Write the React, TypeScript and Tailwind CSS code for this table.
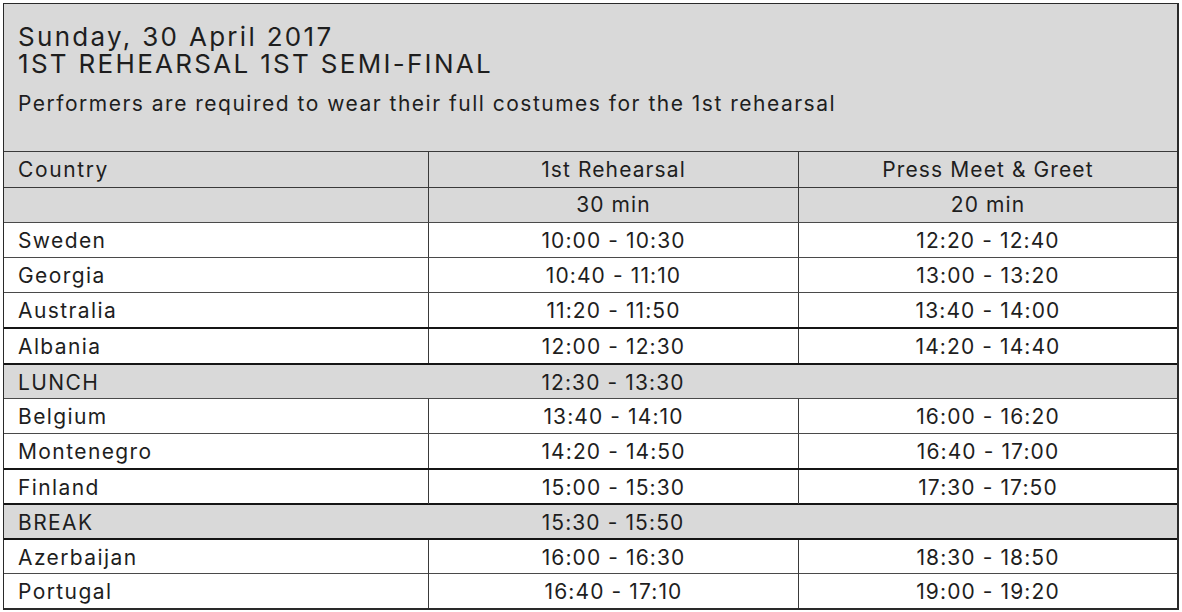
import React from 'react';

type Row = {
  country: string;
  rehearsal: string;
  press?: string;
  gray?: boolean;
  top?: 'thin' | 'thick';
  h: string;
};

const rows: Row[] = [
  { country: 'Sweden', rehearsal: '10:00 - 10:30', press: '12:20 - 12:40', top: 'thin', h: 'h-[35px]' },
  { country: 'Georgia', rehearsal: '10:40 - 11:10', press: '13:00 - 13:20', top: 'thin', h: 'h-[35px]' },
  { country: 'Australia', rehearsal: '11:20 - 11:50', press: '13:40 - 14:00', top: 'thin', h: 'h-[35px]' },
  { country: 'Albania', rehearsal: '12:00 - 12:30', press: '14:20 - 14:40', top: 'thick', h: 'h-[36px]' },
  { country: 'LUNCH', rehearsal: '12:30 - 13:30', gray: true, top: 'thick', h: 'h-[35px]' },
  { country: 'Belgium', rehearsal: '13:40 - 14:10', press: '16:00 - 16:20', top: 'thin', h: 'h-[35px]' },
  { country: 'Montenegro', rehearsal: '14:20 - 14:50', press: '16:40 - 17:00', top: 'thin', h: 'h-[35px]' },
  { country: 'Finland', rehearsal: '15:00 - 15:30', press: '17:30 - 17:50', top: 'thick', h: 'h-[35px]' },
  { country: 'BREAK', rehearsal: '15:30 - 15:50', gray: true, top: 'thick', h: 'h-[35px]' },
  { country: 'Azerbaijan', rehearsal: '16:00 - 16:30', press: '18:30 - 18:50', top: 'thick', h: 'h-[35px]' },
  { country: 'Portugal', rehearsal: '16:40 - 17:10', press: '19:00 - 19:20', top: 'thin', h: 'h-[35px]' },
];

const title = 'Sunday, 30 April 2017\n1ST REHEARSAL 1ST SEMI-FINAL';

const App: React.FC = () => {
  return (
    <div className="w-[1182px] h-[612px] bg-white pt-[3px] pl-[3px] text-[#1e1e1e] font-['Inter','Liberation_Sans',sans-serif]">
      <div className="w-[1176px] border-l border-t border-r-2 border-b-2 border-[#2a2a2a]">
        {/* Title block */}
        <div className="h-[147px] bg-[#d9d9d9] px-[14px] pt-[19px]">
          <h1 className="whitespace-pre-line text-[26px] leading-[27px] tracking-[2.3px]">{title}</h1>
          <p className="mt-[15px] text-[21px] leading-[24px] tracking-[1.5px]">
            Performers are required to wear their full costumes for the 1st rehearsal
          </p>
        </div>

        {/* Column headers */}
        <div className="grid grid-cols-[424px_370px_1fr] h-[36px] bg-[#d9d9d9] border-t border-[#3a3a3a] text-[21px] tracking-[1.1px]">
          <div className="flex items-center px-[14px] tracking-[1.6px]">Country</div>
          <div className="flex items-center justify-center border-l border-[#3a3a3a]">1st Rehearsal</div>
          <div className="flex items-center justify-center border-l border-[#3a3a3a]">Press Meet &amp; Greet</div>
        </div>
        <div className="grid grid-cols-[424px_370px_1fr] h-[35px] bg-[#d9d9d9] border-t border-[#3a3a3a] text-[21px] tracking-[1.1px]">
          <div className="flex items-center px-[14px]"></div>
          <div className="flex items-center justify-center border-l border-[#3a3a3a]">30 min</div>
          <div className="flex items-center justify-center border-l border-[#3a3a3a]">20 min</div>
        </div>

        {rows.map((r) => (
          <div
            key={r.country}
            className={`grid grid-cols-[424px_370px_1fr] ${r.h} text-[21px] tracking-[1.1px] ${
              r.top === 'thick' ? 'border-t-2 border-[#151515]' : 'border-t border-[#4a4a4a]'
            } ${r.gray ? 'bg-[#d9d9d9]' : 'bg-white'}`}
          >
            <div className="flex items-center px-[14px] pt-[2px] tracking-[1.4px]">{r.country}</div>
            <div
              className={`flex items-center justify-center pt-[2px] ${
                r.gray ? '' : 'border-l border-[#3a3a3a]'
              }`}
            >
              {r.rehearsal}
            </div>
            <div
              className={`flex items-center justify-center pt-[2px] ${
                r.gray ? '' : 'border-l border-[#3a3a3a]'
              }`}
            >
              {r.press ?? ''}
            </div>
          </div>
        ))}
      </div>
    </div>
  );
};

export default App;
